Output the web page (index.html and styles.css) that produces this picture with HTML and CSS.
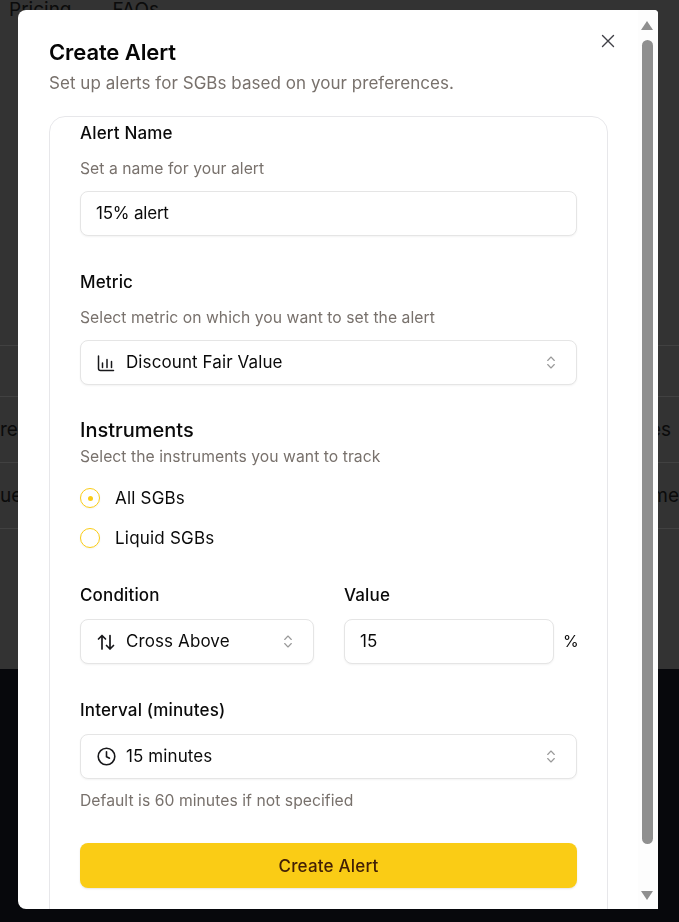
FILE: index.html
```html
<!DOCTYPE html>
<html lang="en">
<head>
<meta charset="utf-8">
<title>Create Alert</title>
<link rel="stylesheet" href="styles.css">
</head>
<body>
<div class="page">
  <nav class="bg-nav"><span>Pricing</span><span>FAQs</span></nav>
  <div class="bg-table">
    <div class="bg-row bg-row-head"></div>
    <div class="bg-row"><span>re</span><span>es</span></div>
    <div class="bg-row bg-row-last"><span>ue</span><span>me</span></div>
  </div>
  <footer class="bg-footer"></footer>
</div>
<div class="modal" role="dialog">
  <button class="close" aria-label="Close">
    <svg width="16" height="16" viewBox="0 0 16 16" fill="none" stroke="#3f3f46" stroke-width="1.4" stroke-linecap="round"><path d="M2.5 2.5l11 11M13.5 2.5l-11 11"/></svg>
  </button>
  <header class="head">
    <h1>Create Alert</h1>
    <p>Set up alerts for SGBs based on your preferences.</p>
  </header>
  <form class="card">
    <div class="field f-name">
      <div class="label">Alert Name</div>
      <div class="help">Set a name for your alert</div>
      <div class="control name-input"><span>15% alert</span></div>
    </div>
    <div class="field f-metric">
      <div class="label">Metric</div>
      <div class="help">Select metric on which you want to set the alert</div>
      <div class="control">
        <svg class="ico" width="18" height="18" viewBox="0 0 18 18" fill="none" stroke="#18181b" stroke-width="1.5" stroke-linecap="round" stroke-linejoin="round"><path d="M1.500 2v12.500a2 2 0 0 0 2 2h13"/><path d="M5.500 9v4.500M10 5.500v8M14.500 7.500v6"/></svg>
        <span>Discount Fair Value</span>
        <svg class="chev" width="8" height="13" viewBox="0 0 8 13" fill="none" stroke="#999" stroke-width="1.100" stroke-linecap="round" stroke-linejoin="round"><path d="M.7 4.500L4 1l3.300 3.500M.7 8.500L4 12l3.300-3.500"/></svg>
      </div>
    </div>
    <div class="field f-inst">
      <div class="label-lg">Instruments</div>
      <div class="help">Select the instruments you want to track</div>
      <div class="radios">
        <div class="radio-row"><span class="radio on"></span><span>All SGBs</span></div>
        <div class="radio-row"><span class="radio"></span><span>Liquid SGBs</span></div>
      </div>
    </div>
    <div class="cond">
      <div class="cond-col">
        <div class="label">Condition</div>
        <div class="control">
          <svg class="ico" width="18" height="18" viewBox="0 0 18 18" fill="none" stroke="#18181b" stroke-width="1.700" stroke-linecap="round" stroke-linejoin="round"><path d="M5 16V2.500M1.500 6L5 2.500 8.500 6"/><path d="M13 2.500V16M9.500 12.500L13 16l3.500-3.500"/></svg>
          <span>Cross Above</span>
          <svg class="chev" width="8" height="13" viewBox="0 0 8 13" fill="none" stroke="#999" stroke-width="1.100" stroke-linecap="round" stroke-linejoin="round"><path d="M.7 4.500L4 1l3.300 3.500M.7 8.500L4 12l3.300-3.500"/></svg>
        </div>
      </div>
      <div class="cond-col">
        <div class="label">Value</div>
        <div class="value-row">
          <div class="control value"><span>15</span></div>
          <span class="pct">%</span>
        </div>
      </div>
    </div>
    <div class="field f-int">
      <div class="label">Interval (minutes)</div>
      <div class="control">
        <svg class="ico" width="19" height="19" viewBox="0 0 19 19" fill="none" stroke="#18181b" stroke-width="1.600" stroke-linecap="round" stroke-linejoin="round"><circle cx="9.500" cy="9.500" r="8.300"/><path d="M9.500 4.800v4.900l3 1.500"/></svg>
        <span>15 minutes</span>
        <svg class="chev" width="8" height="13" viewBox="0 0 8 13" fill="none" stroke="#999" stroke-width="1.100" stroke-linecap="round" stroke-linejoin="round"><path d="M.7 4.500L4 1l3.300 3.500M.7 8.500L4 12l3.300-3.500"/></svg>
      </div>
      <div class="hint">Default is 60 minutes if not specified</div>
    </div>
    <button class="submit" type="button">Create Alert</button>
  </form>
  <div class="scrollbar">
    <span class="arrow up"></span>
    <span class="thumb"></span>
    <span class="arrow down"></span>
  </div>
</div>
</body>
</html>
```
FILE: styles.css
```css
* { box-sizing: border-box; }
html, body { margin: 0; height: 100%; }
body {
  width: 679px;
  height: 922px;
  overflow: hidden;
  font-family: Inter, "Liberation Sans", sans-serif;
  color: #0a0a0a;
  background: #07080c;
}
.page {
  height: 922px;
  display: flex;
  flex-direction: column;
  background: #07080c;
}
.bg-nav {
  height: 346px;
  flex: none;
  background: #333;
  color: #0b0b0b;
  font-size: 19px;
  display: flex;
  gap: 41px;
  padding: 0 0 0 9px;
  line-height: 20px;
  border-bottom: 1px solid #414141;
}
.bg-table {
  height: 323px;
  flex: none;
  background: #333;
  font-size: 19px;
  color: #0b0b0b;
}
.bg-row {
  height: 66px;
  display: flex;
  justify-content: space-between;
  align-items: center;
  border-bottom: 1px solid #414141;
  padding: 0 8px 0 0;
}
.bg-row-head { height: 51px; }
.bg-row-last { padding-right: 0; }
.modal {
  position: fixed;
  left: 18px;
  top: 10px;
  width: 640px;
  height: 899px;
  background: #fff;
  border-radius: 8px 4px 0 8px;
  overflow: hidden;
}
.close {
  position: absolute;
  left: 582px;
  top: 23px;
  width: 16px;
  height: 16px;
  padding: 0;
  border: 0;
  background: none;
  display: flex;
}
.head { padding: 28px 31px 0; height: 106px; }
.head h1 {
  margin: 0;
  font-size: 22px;
  line-height: 28px;
  font-weight: 600;
  letter-spacing: -0.1px;
  color: #050505;
}
.head p {
  margin: 5px 0 0;
  font-size: 17px;
  line-height: 24px;
  letter-spacing: .04px;
  color: #78716c;
}
.card {
  margin-left: 31px;
  width: 559px;
  height: 860px;
  border: 1px solid #e7e7ea;
  border-radius: 16px;
  padding: 5px 30px 0;
}
.label { font-size: 17px; line-height: 22px; font-weight: 500; letter-spacing: .15px; color: #0a0a0a; }
.label-lg { font-size: 20px; line-height: 24px; font-weight: 500; color: #0a0a0a; }
.help { font-size: 15.700px; line-height: 20px; letter-spacing: .05px; color: #78716c; margin-top: 15px; }
.control {
  height: 45px;
  margin-top: 12px;
  border: 1px solid #e5e5e5;
  border-radius: 8px;
  box-shadow: 0 1px 2px rgba(0, 0, 0, .05);
  background: #fff;
  display: flex;
  align-items: center;
  padding: 0 16px;
  font-size: 17px;
  line-height: 20px;
  letter-spacing: .1px;
  gap: 11px;
}
.name-input { padding-left: 15px; letter-spacing: -.2px; }
.control > span { position: relative; top: -1px; }
.ico { flex: none; }
.chev { flex: none; margin-left: auto; margin-right: 5px; }
.f-metric { margin-top: 35px; }
.f-inst { margin-top: 33px; }
.f-inst .help { margin-top: 5px; }
.radios { margin-top: 21px; display: flex; flex-direction: column; gap: 20px; }
.radio-row { display: flex; align-items: center; gap: 15px; font-size: 17px; line-height: 20px; letter-spacing: .2px; }
.radio {
  width: 20px;
  height: 20px;
  border: 1px solid #facc15;
  border-radius: 50%;
  display: flex;
  align-items: center;
  justify-content: center;
  box-shadow: 0 1px 2px rgba(0, 0, 0, .05);
}
.radio.on::after {
  content: "";
  width: 5px;
  height: 5px;
  background: #facc15;
  border-radius: 50%;
}
.cond {
  margin-top: 36px;
  display: grid;
  grid-template-columns: 234px 233px;
  column-gap: 30px;
}
.cond .control { margin-top: 13px; }
.value-row { display: flex; align-items: flex-end; }
.value { width: 210px; flex: none; padding: 0 15px; letter-spacing: 0; }
.pct { margin-left: 9px; font-size: 16px; line-height: 45px; height: 45px; }
.f-int { margin-top: 35px; }
.f-int .control { margin-top: 13px; gap: 10px; }
.hint { font-size: 15.700px; line-height: 20px; letter-spacing: .05px; color: #78716c; margin-top: 12px; }
.submit {
  display: block;
  width: 497px;
  height: 45px;
  margin-top: 32px;
  border: 0;
  border-radius: 8px;
  background: #facc15;
  box-shadow: 0 1px 2px rgba(0, 0, 0, .1);
  color: #422006;
  font: 500 17px Inter, "Liberation Sans", sans-serif;
  letter-spacing: .2px;
}
.scrollbar {
  position: absolute;
  right: 0;
  top: 0;
  bottom: 0;
  width: 20px;
  background: #fdfdfd;
  display: flex;
  flex-direction: column;
  align-items: center;
  padding-right: 2px;
}
.arrow { width: 0; height: 0; flex: none; border-left: 6.500px solid transparent; border-right: 6.500px solid transparent; }
.arrow.up { margin-top: 11px; border-bottom: 9px solid #8f8f8f; }
.arrow.down { margin-top: 47px; border-top: 9px solid #8f8f8f; }
.thumb { width: 11px; flex: none; height: 804px; margin-top: 10px; background: #8f8f8f; border-radius: 6px; }
```
